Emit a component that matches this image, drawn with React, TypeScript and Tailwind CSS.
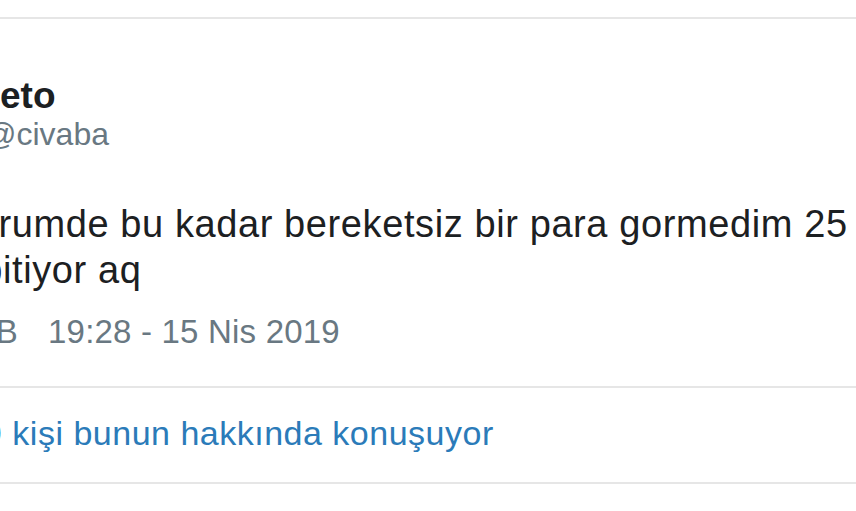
export default function App() {
  return (
    <div className="w-[856px] h-[511px] overflow-hidden bg-white font-['Liberation_Sans',Arial,sans-serif]">
      <div className="pt-[17px]">
        <div className="h-[2px] bg-[#e6e6e6]" />

        {/* author */}
        <div className="mt-[60px] flex flex-col">
          <div className="text-[37px] leading-[34px] font-bold text-[#1c2022] whitespace-nowrap">
            eto
          </div>
          <div className="-ml-[16px] mt-[5px] text-[32px] leading-[32px] text-[#697882] whitespace-nowrap">
            @civaba
          </div>
        </div>

        {/* tweet text */}
        <div className="mt-[51px] text-[38px] leading-[46px] tracking-[0.6px] text-[#1c2022] whitespace-nowrap">
          <div className="-ml-[64px]">Omrumde bu kadar bereketsiz bir para gormedim 25</div>
          <div className="-ml-[74px]">TL bitiyor aq</div>
        </div>

        {/* meta */}
        <div className="mt-[23px] flex items-center text-[33px] leading-[32px] tracking-[0.2px] text-[#697882] whitespace-nowrap">
          <span className="-ml-[60px]">1,2 B</span>
          <span className="ml-[30px]">19:28 - 15 Nis 2019</span>
        </div>

        <div className="mt-[38px] h-[2px] bg-[#e6e6e6]" />

        {/* conversation link */}
        <div className="mt-[28px] -ml-[17px] text-[34px] leading-[34px] tracking-[0.5px] text-[#2b7bb9] whitespace-nowrap">
          9 kişi bunun hakkında konuşuyor
        </div>

        <div className="mt-[32px] h-[2px] bg-[#e6e6e6]" />
      </div>
    </div>
  );
}
